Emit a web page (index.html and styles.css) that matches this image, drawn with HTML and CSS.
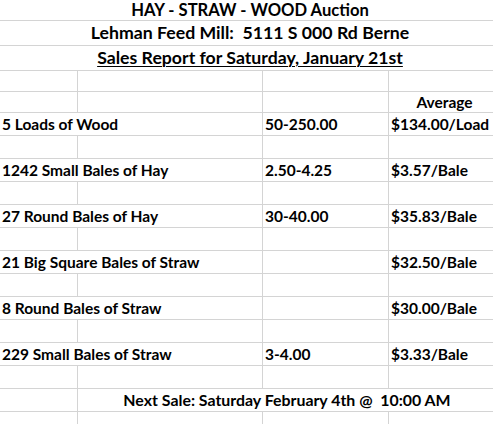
FILE: index.html
```html
<!DOCTYPE html>
<html>
<head>
<meta charset="utf-8">
<link rel="stylesheet" href="styles.css">
<title>HAY - STRAW - WOOD Auction</title>
</head>
<body>
<div class="sheet">
  <div class="row r-title1"><div class="c span4 t1">HAY - STRAW - WOOD Auction</div></div>
  <div class="row r-title"><div class="c span4 t2">Lehman Feed Mill:  5111 S 000 Rd Berne</div></div>
  <div class="row r-title"><div class="c span4 t2"><span class="ul">Sales Report for Saturday, January 21st</span></div></div>
  <div class="row r-short"><div class="c bl"></div><div class="c bl"></div><div class="c bl"></div><div class="c"></div></div>
  <div class="row r-short"><div class="c bl"></div><div class="c bl"></div><div class="c bl"></div><div class="c center">Average</div></div>

  <div class="row"><div class="c span2 bl">5 Loads of Wood</div><div class="c bl">50-250.00</div><div class="c">$134.00/Load</div></div>
  <div class="row"><div class="c bl"></div><div class="c bl"></div><div class="c bl"></div><div class="c"></div></div>
  <div class="row"><div class="c span2 bl">1242 Small Bales of Hay</div><div class="c bl">2.50-4.25</div><div class="c">$3.57/Bale</div></div>
  <div class="row"><div class="c bl"></div><div class="c bl"></div><div class="c bl"></div><div class="c"></div></div>
  <div class="row"><div class="c span2 bl">27 Round Bales of Hay</div><div class="c bl">30-40.00</div><div class="c">$35.83/Bale</div></div>
  <div class="row"><div class="c bl"></div><div class="c bl"></div><div class="c bl"></div><div class="c"></div></div>
  <div class="row"><div class="c span2 bl">21 Big Square Bales of Straw</div><div class="c bl"></div><div class="c">$32.50/Bale</div></div>
  <div class="row"><div class="c bl"></div><div class="c bl"></div><div class="c bl"></div><div class="c"></div></div>
  <div class="row"><div class="c span2 bl">8 Round Bales of Straw</div><div class="c bl"></div><div class="c">$30.00/Bale</div></div>
  <div class="row"><div class="c bl"></div><div class="c bl"></div><div class="c bl"></div><div class="c"></div></div>
  <div class="row"><div class="c span2 bl">229 Small Bales of Straw</div><div class="c bl">3-4.00</div><div class="c">$3.33/Bale</div></div>
  <div class="row"><div class="c bl"></div><div class="c bl"></div><div class="c bl"></div><div class="c"></div></div>
  <div class="row"><div class="c bl"></div><div class="c span3 next">Next Sale: Saturday February 4th @  10:00 AM</div></div>
  <div class="row"><div class="c bl"></div><div class="c bl"></div><div class="c bl"></div><div class="c"></div></div>
</div>
</body>
</html>
```
FILE: styles.css
```css
html, body {
  margin: 0;
  padding: 0;
  background: #ffffff;
  overflow: hidden;
}

.sheet {
  width: 500px;
  font-family: "Lato", "Carlito", "Liberation Sans", sans-serif;
  font-weight: 700;
  font-size: 15.5px;
  color: #000000;
}

.row {
  display: grid;
  grid-template-columns: 78px 185px 126px 111px;
  height: 23px;
  box-sizing: border-box;
  border-bottom: 1px solid #d4d4d4;
}

.r-title1 { height: 21px; }
.r-title { height: 25px; }
.r-short { height: 21px; }

.c {
  display: flex;
  align-items: flex-end;
  padding: 0 0 2px 2px;
  box-sizing: border-box;
  white-space: pre;
  overflow: visible;
  min-width: 0;
}

.bl { border-right: 1px solid #d4d4d4; }

.span2 { grid-column: span 2; }
.span3 { grid-column: span 3; }
.span4 { grid-column: span 4; }

.t1 {
  justify-content: center;
  padding: 0 0 1px 0;
  font-size: 16.6px;
}

.t2 {
  justify-content: center;
  padding: 0 0 2px 0;
  font-size: 17.7px;
}

.ul {
  text-decoration: underline;
  text-decoration-thickness: 1px;
  text-underline-offset: 2px;
}

.center {
  justify-content: center;
  padding: 0 0 1px 0;
}

.next {
  justify-content: center;
  padding: 0 4px 2px 0;
  font-size: 15.9px;
}
```
